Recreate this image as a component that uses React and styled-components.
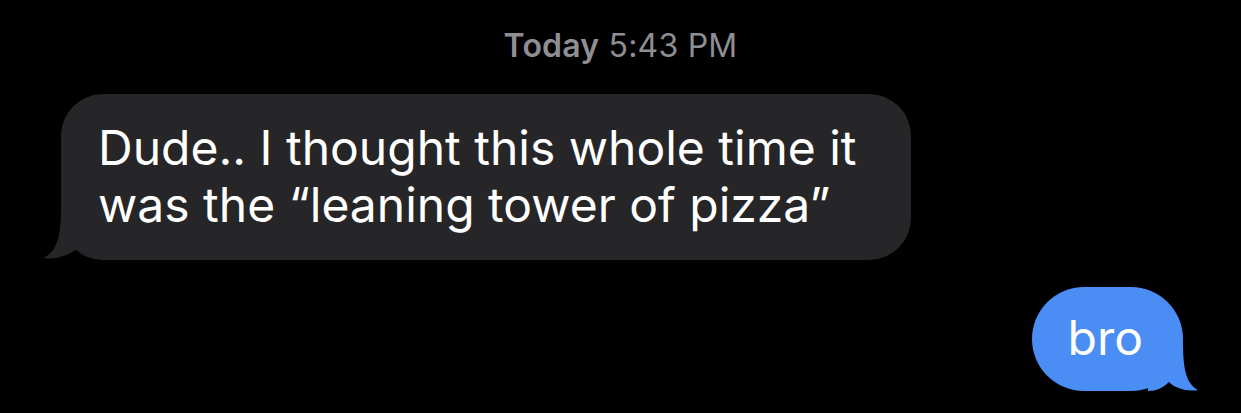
import React from 'react';
import styled, { createGlobalStyle } from 'styled-components';

const GlobalStyle = createGlobalStyle`
  html, body {
    margin: 0;
    padding: 0;
    background: #000;
  }
  body {
    font-family: Inter, "Liberation Sans", sans-serif;
    -webkit-font-smoothing: antialiased;
  }
`;

const Thread = styled.div`
  width: 1241px;
  height: 413px;
  background: #000;
  display: flex;
  flex-direction: column;
  padding-top: 27px;
  box-sizing: border-box;
  overflow: hidden;
`;

const Stamp = styled.div`
  text-align: center;
  color: #8e8e93;
  font-size: 32px;
  line-height: 38px;
  letter-spacing: 0.2px;

  b {
    font-weight: 600;
  }
`;

const Row = styled.div`
  display: flex;
  justify-content: ${p => (p.$mine ? 'flex-end' : 'flex-start')};
  padding: ${p => (p.$mine ? '0 58px 0 0' : '0 0 0 61px')};
  margin-top: ${p => p.$gap}px;
`;

const Bubble = styled.div`
  position: relative;
  background: ${p => (p.$mine ? '#4a8ef5' : '#262628')};
  color: #fff;
  border-radius: ${p => (p.$mine ? '52px' : '42px')};
  padding: ${p => (p.$mine ? '22px 40px 25px 36px' : '25px 54px 27px 37px')};
  font-size: 48px;
  line-height: 57px;
  white-space: pre-line;
`;

const Text = styled.span`
  position: relative;
`;

const Tail = styled.svg`
  position: absolute;
  bottom: 0;
  ${p => (p.$mine ? 'right: -15px;' : 'left: -18px;')}
`;

function IncomingTail() {
  return (
    <Tail width="60" height="50" viewBox="0 0 60 50">
      <path
        d="M18 0 C18 30 12 43 0 48 C13 50 27 45 35 38 C42 45 50 49 60 50 L60 0 Z"
        fill="#262628"
      />
    </Tail>
  );
}

function OutgoingTail() {
  return (
    <Tail $mine width="50" height="48" viewBox="0 0 50 48">
      <path
        d="M35 0 C35 28 39 41 50 47 C39 49 26 45 21 39 C15 45 8 48 0 48 L0 0 Z"
        fill="#4a8ef5"
      />
    </Tail>
  );
}

export default function App() {
  return (
    <>
      <GlobalStyle />
      <Thread>
        <Stamp>
          <b>Today</b> 5:43 PM
        </Stamp>
        <Row $gap={29}>
          <Bubble>
            <IncomingTail />
            <Text>{'Dude.. I thought this whole time it\nwas the \u201Cleaning tower of pizza\u201D'}</Text>
          </Bubble>
        </Row>
        <Row $mine $gap={27}>
          <Bubble $mine>
            <OutgoingTail />
            <Text>bro</Text>
          </Bubble>
        </Row>
      </Thread>
    </>
  );
}
